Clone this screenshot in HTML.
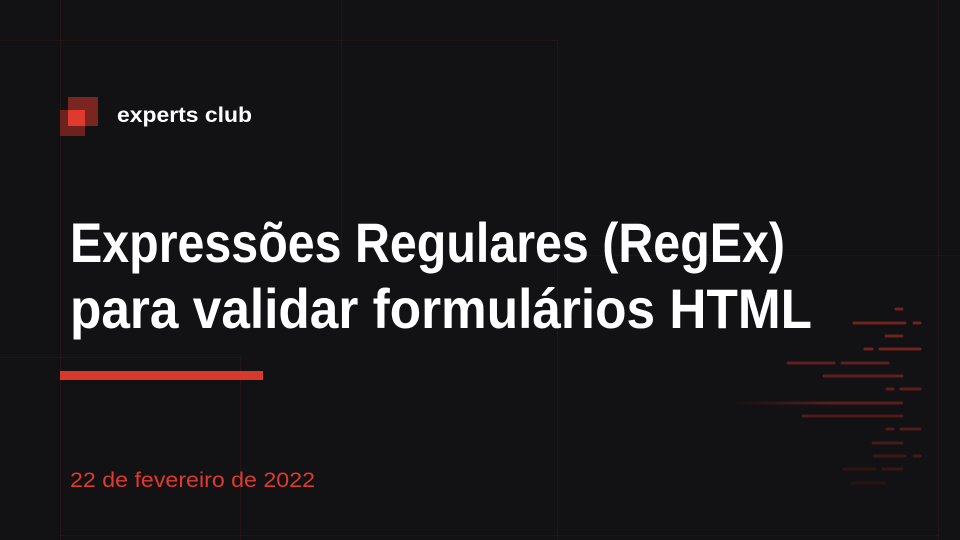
<!DOCTYPE html>
<html><head><meta charset="utf-8"><style>
html,body{margin:0;padding:0;background:#121114;}
body{width:960px;height:540px;overflow:hidden;position:relative;}
</style></head><body>
<svg width="960" height="540" style="position:absolute;left:0;top:0">
<rect width="960" height="540" fill="#121114"/>
<g stroke="#231516" stroke-width="1" fill="none">
<line x1="60.5" y1="0" x2="60.5" y2="540"/>
<line x1="341.5" y1="0" x2="341.5" y2="255"/>
<line x1="557.5" y1="40" x2="557.5" y2="540"/>
<line x1="938.5" y1="0" x2="938.5" y2="540"/>
<line x1="240.5" y1="357" x2="240.5" y2="540"/>
<line x1="0" y1="40.5" x2="557" y2="40.5"/>
<line x1="557" y1="255.5" x2="960" y2="255.5"/>
<line x1="0" y1="357.5" x2="240" y2="357.5"/>
<line x1="60" y1="535.5" x2="938" y2="535.5"/>
</g>
<rect x="68" y="97" width="30" height="29" fill="#7b2520"/>
<rect x="60" y="110" width="25" height="26" fill="#6e221e"/>
<rect x="68" y="110" width="17" height="16" fill="#e03a2e"/>
<text x="117" y="122" font-family="Liberation Sans, sans-serif" font-weight="bold" font-size="21" fill="#fff" textLength="135" lengthAdjust="spacingAndGlyphs">experts club</text>
<text x="70" y="262" font-family="Liberation Sans, sans-serif" font-weight="bold" font-size="56" fill="#fff" textLength="715" lengthAdjust="spacingAndGlyphs">Expressões Regulares (RegEx)</text>
<text x="70" y="328" font-family="Liberation Sans, sans-serif" font-weight="bold" font-size="56" fill="#fff" textLength="742" lengthAdjust="spacingAndGlyphs">para validar formulários HTML</text>
<rect x="60" y="371" width="203" height="9" fill="#d9382c"/>
<text x="70" y="487" font-family="Liberation Sans, sans-serif" font-size="21" fill="#e0392d" textLength="245" lengthAdjust="spacingAndGlyphs">22 de fevereiro de 2022</text>
<defs><linearGradient id="f" gradientUnits="userSpaceOnUse" x1="730" y1="0" x2="902" y2="0"><stop offset="0" stop-color="#5a1f1c" stop-opacity="0"/><stop offset="0.6" stop-color="#5a1f1c"/></linearGradient></defs>
<rect x="730" y="401.5" width="173" height="3" rx="1.5" fill="url(#f)"/>
<g stroke="#6e231f" stroke-width="3" stroke-linecap="round">
<line x1="896" y1="309" x2="902" y2="309"/>
<line x1="854" y1="323" x2="905" y2="323"/><line x1="914" y1="323" x2="920" y2="323"/>
<line x1="886" y1="336" x2="902" y2="336"/>
<line x1="865" y1="349" x2="872" y2="349"/><line x1="880" y1="349" x2="920" y2="349"/>
<line x1="788" y1="363" x2="834" y2="363" stroke="#5e201d"/><line x1="842" y1="363" x2="888" y2="363" stroke="#5e201d"/>
<line x1="824" y1="376" x2="902" y2="376" stroke="#5e201d"/>
<line x1="887" y1="389" x2="893" y2="389" stroke="#5a1f1c"/><line x1="901" y1="389" x2="920" y2="389" stroke="#5a1f1c"/>
<line x1="803" y1="416" x2="902" y2="416" stroke="#4e1c1a"/>
<line x1="887" y1="429" x2="893" y2="429" stroke="#4e1c1a"/><line x1="901" y1="429" x2="920" y2="429" stroke="#4e1c1a"/>
<line x1="873" y1="443" x2="902" y2="443" stroke="#441a18"/>
<line x1="874" y1="456" x2="905" y2="456" stroke="#3e1817"/><line x1="914" y1="456" x2="920" y2="456" stroke="#441a18"/>
<line x1="844" y1="469" x2="875" y2="469" stroke="#2e1615"/><line x1="883" y1="469" x2="902" y2="469" stroke="#361716"/>
<line x1="852" y1="483" x2="885" y2="483" stroke="#261414"/>
</g>
</svg>
</body></html>
